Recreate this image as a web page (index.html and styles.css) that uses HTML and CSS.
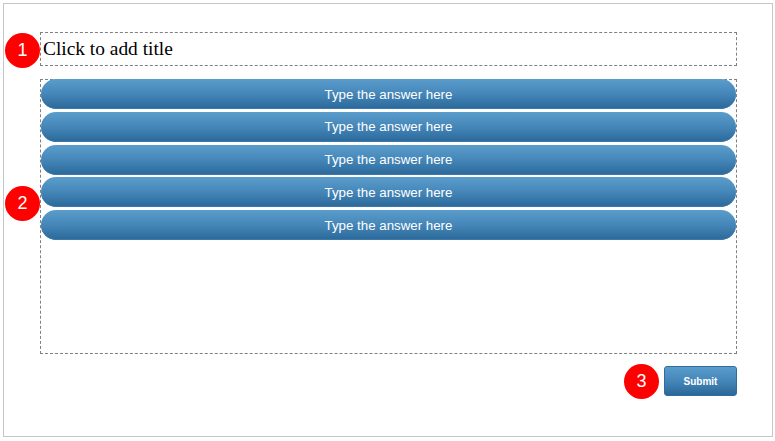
FILE: index.html
```html
<!DOCTYPE html>
<html>
<head>
<meta charset="utf-8">
<link rel="stylesheet" href="styles.css">
</head>
<body>
<div class="frame">
  <div class="title-box">Click to add title</div>
  <div class="answers">
    <div class="answer">Type the answer here</div>
    <div class="answer">Type the answer here</div>
    <div class="answer">Type the answer here</div>
    <div class="answer">Type the answer here</div>
    <div class="answer">Type the answer here</div>
  </div>
  <div class="footer">
    <button class="submit">Submit</button>
  </div>
  <span class="badge b1">1</span>
  <span class="badge b2">2</span>
  <span class="badge b3">3</span>
</div>
</body>
</html>
```
FILE: styles.css
```css
html, body {
  margin: 0;
  padding: 0;
  background: #ffffff;
}
.frame {
  position: relative;
  margin: 3px 0 0 3px;
  width: 770px;
  height: 434px;
  border: 1px solid #c6c6c6;
  box-sizing: border-box;
  padding: 28px 0 0 36px;
  display: flex;
  flex-direction: column;
  font-family: "Liberation Sans", Arial, sans-serif;
}
.title-box {
  width: 697px;
  height: 34px;
  box-sizing: border-box;
  border: 1px dashed #808080;
  font-family: "Liberation Serif", "Times New Roman", serif;
  font-size: 19.4px;
  line-height: 31px;
  padding-left: 2px;
  color: #000;
}
.answers {
  margin-top: 13px;
  width: 697px;
  height: 275px;
  box-sizing: border-box;
  border: 1px dashed #808080;
  display: flex;
  flex-direction: column;
  gap: 2.75px;
}
.answer {
  height: 30px;
  flex: 0 0 30px;
  border-radius: 15px;
  background: linear-gradient(to bottom, #5a9dcc 0%, #4586b8 50%, #2a6899 100%);
  box-shadow: inset 0 -1px 0 #3a78ad;
  color: #ffffff;
  font-size: 13.3px;
  display: flex;
  align-items: center;
  justify-content: center;
}
.answer:first-child {
  margin-top: -1px;
}
.footer {
  width: 697px;
  display: flex;
  justify-content: flex-end;
  margin-top: 12px;
}
.submit {
  width: 73px;
  height: 30px;
  border: 1px solid #2f6d9d;
  border-radius: 3px;
  background: linear-gradient(to bottom, #5a9dcc 0%, #4586b8 50%, #2a6899 100%);
  color: #ffffff;
  font-family: "Liberation Sans", Arial, sans-serif;
  font-size: 10px;
  font-weight: bold;
  padding: 0;
}
.badge {
  position: absolute;
  width: 35px;
  height: 35px;
  border-radius: 50%;
  background: #ff0000;
  color: #ffffff;
  font-family: "Liberation Sans", Arial, sans-serif;
  font-size: 18px;
  display: flex;
  align-items: center;
  justify-content: center;
}
.b1 { left: 1px; top: 29px; }
.b2 { left: 1px; top: 182px; }
.b3 { left: 620px; top: 360px; }
```
